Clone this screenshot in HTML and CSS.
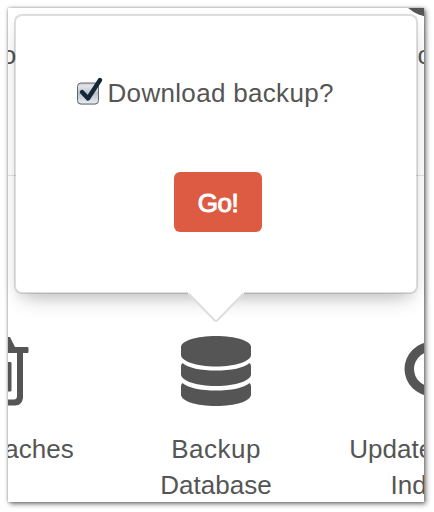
FILE: index.html
```html
<!DOCTYPE html>
<html lang="en">
<head>
<meta charset="utf-8">
<title>Utilities</title>
<link rel="stylesheet" href="styles.css">
</head>
<body>
<main class="window">
  <div class="row row-top">
    <div class="tile tile-left"><span class="label">o</span></div>
    <div class="tile"></div>
    <div class="tile tile-right">
      <svg class="disc" width="72" height="72" viewBox="0 0 72 72"><circle cx="36" cy="36" r="36"/></svg>
      <span class="label">c</span>
    </div>
  </div>
  <div class="row row-tools">
    <div class="tile tile-caches">
      <svg class="icon" width="72" height="72" viewBox="0 0 72 72">
        <path fill-rule="evenodd" d="M23 2h25l5 10h12c1 0 1.500.500 1.500 1.500v3c0 1-.500 1.500-1.500 1.500h-4v44c0 5-3.500 8.500-7.500 8.500H20c-5 0-8-4-8-8.500V18H6v-6h12zm-5 16v43c0 2 1 3.500 3 3.500h31c2 0 3-1.500 3-3.500V18z"/>
        <path d="M25 27h6v29h-6zM43 27h5c1 0 1.500.500 1.500 1.500V55c0 1-.500 1.500-1.500 1.500h-5z"/>
      </svg>
      <span class="label">Clear Caches</span>
    </div>
    <div class="tile">
      <svg class="icon" width="72" height="72" viewBox="0 0 72 72">
        <path d="M1 12C1 6 16 1 36 1s35 5 35 11v8c0 6-15 11.500-35 11.500S1 26 1 20z"/>
        <path d="M2.500 28C8 33 21 35.500 36 35.500S64 33 69.500 28c1 1 1.500 2 1.500 3v8.500c0 6-15 11.500-35 11.500S1 45.500 1 39.500V31c0-1 .500-2 1.500-3z"/>
        <path d="M2.500 48C8 53 21 55.500 36 55.500S64 53 69.500 48c1 1 1.500 2 1.500 3v8.500C71 66 56 71 36 71S1 66 1 59.500V51c0-1 .500-2 1.500-3z"/>
      </svg>
      <span class="label"><span class="wide">Backup</span><br>Database</span>
    </div>
    <div class="tile tile-search">
      <svg class="icon" width="72" height="72" viewBox="0 0 72 72">
        <path fill-rule="evenodd" d="M34.500 7a27 27 0 1 0 0 54a27 27 0 1 0 0-54zm0 9.500a17.500 17.500 0 1 1 0 35a17.500 17.500 0 1 1 0-35z"/>
        <path d="M51 55l6-6 14 15-6 6z"/>
      </svg>
      <span class="label">Update Search<br>Indexes</span>
    </div>
  </div>

  <form class="popover">
    <label class="option">
      <svg class="check" width="30" height="32" viewBox="0 0 30 32">
        <defs>
          <linearGradient id="box" x1="0" y1="0" x2="0" y2="1">
            <stop offset="0" stop-color="#c9cdd3"/>
            <stop offset=".15" stop-color="#e2e5ea"/>
            <stop offset=".5" stop-color="#b9c0cc"/>
            <stop offset="1" stop-color="#eaeff5"/>
          </linearGradient>
        </defs>
        <rect x="2" y="8" width="21.500" height="21" rx="4" fill="#000" opacity=".12"/>
        <rect x="2.500" y="7" width="21" height="21" rx="3.500" fill="url(#box)" stroke="#62666d"/>
        <path d="M7 16l6 6.500L25 4" fill="none" stroke="#162636" stroke-width="4.400" stroke-linecap="round" stroke-linejoin="round"/>
      </svg>
      <span class="option-text">Download backup?</span>
    </label>
    <button class="go" type="button">Go!</button>
    <svg class="arrow" width="58" height="32" viewBox="0 0 58 32">
      <path d="M1 0h56v1.500L30.500 28.500q-1.500 1.500-3 0L1 1.500z" fill="#fff"/>
      <path d="M1.500 1.500L27.500 28.300q1.500 1.500 3 0L56.500 1.500" fill="none" stroke="#dedede" stroke-width="2"/>
    </svg>
  </form>
</main>
</body>
</html>
```
FILE: styles.css
```css
* {
  box-sizing: border-box;
}

body {
  margin: 0;
  padding: 8px;
  background: #fff;
  color: #555;
  font: 26px/36px "Liberation Sans", Arial, sans-serif;
}

.window {
  position: relative;
  width: 416px;
  height: 494px;
  background: #fff;
  box-shadow: 0 0 3px rgba(0, 0, 0, .35), 2px 2px 5px rgba(0, 0, 0, .5);
}

.row {
  display: grid;
  grid-template-columns: 99.500px 217px 99.500px;
  justify-items: center;
  overflow: hidden;
}

.row-top {
  height: 168px;
  border-bottom: 1px solid #e2e2e2;
}

.row-tools {
  height: 326px;
  padding-top: 159px;
}

.tile {
  display: flex;
  flex-direction: column;
  align-items: center;
  width: 217px;
}

.row .tile:first-child {
  justify-self: end;
}

.row .tile:last-child {
  justify-self: start;
}

.row-top .tile {
  padding-top: 29px;
}

.row-top .tile-left {
  padding-left: 20px;
}

.row-top .tile-right {
  padding-top: 0;
  padding-right: 18px;
}

.disc {
  margin: -63px 24px 20px 40px;
}

.icon,
.disc {
  display: block;
  flex: none;
  fill: #555;
}

.label {
  margin-top: 24px;
  text-align: center;
  white-space: nowrap;
}

.row-top .label {
  margin-top: 0;
}

.wide {
  letter-spacing: .5px;
}

.tile-caches .icon {
  margin-left: -3px;
}

.tile-caches .label {
  margin-left: -8px;
}

.tile-search .label {
  margin-left: 6px;
}

.popover {
  position: absolute;
  top: 6px;
  left: 6px;
  display: flex;
  flex-direction: column;
  align-items: center;
  width: 404px;
  height: 280px;
  margin: 0;
  padding-top: 59px;
  background: #fff;
  background-clip: padding-box;
  border: 2px solid rgba(0, 0, 0, .13);
  border-radius: 8px;
  box-shadow: 0 13px 20px -10px rgba(0, 0, 0, .24), 0 4px 12px rgba(0, 0, 0, .06);
}

.option {
  display: flex;
  align-items: center;
  gap: 2.500px;
  align-self: flex-start;
  height: 36px;
  margin-left: 59px;
}

.check {
  display: block;
  margin-top: -2px;
}

.option-text {
  letter-spacing: .32px;
}

.go {
  width: 88px;
  height: 60px;
  margin: 61px 0 0 4px;
  padding: 2px 0 0;
  border: 0;
  border-radius: 6px;
  background: #dc5b42;
  color: #fff;
  font: inherit;
  letter-spacing: -.5px;
  -webkit-text-stroke: 1px #fff;
}

.arrow {
  position: absolute;
  top: 276px;
  left: 171px;
}
```
